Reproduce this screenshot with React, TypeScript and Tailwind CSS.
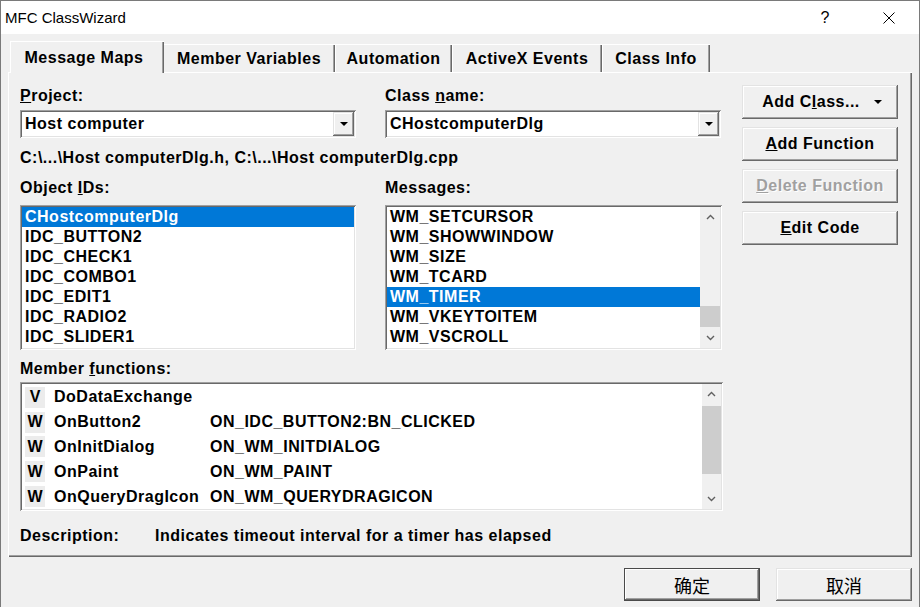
import React from "react";

const raised =
  "shadow-[inset_-1px_-1px_#696969,inset_1px_1px_#e3e3e3,inset_-2px_-2px_#a0a0a0,inset_2px_2px_#ffffff]";
const sunken =
  "shadow-[inset_1px_1px_#a0a0a0,inset_-1px_-1px_#ffffff,inset_2px_2px_#696969,inset_-2px_-2px_#e3e3e3]";

function Chevron({ up }: { up?: boolean }) {
  return (
    <svg width="9" height="6" viewBox="0 0 9 6" className="block">
      <polyline
        points={up ? "1,5 4.5,1.5 8,5" : "1,1 4.5,4.5 8,1"}
        fill="none"
        stroke="#606060"
        strokeWidth="1.4"
      />
    </svg>
  );
}

function DropTri() {
  return (
    <svg width="8" height="4" viewBox="0 0 8 4" className="block">
      <polygon points="0,0 8,0 4,4" fill="#000" />
    </svg>
  );
}

function Combo({ value }: { value: string }) {
  return (
    <div className={`h-[28px] bg-white flex items-center p-[2px] ${sunken}`}>
      <div className="flex-1 pl-[3px] leading-[20px] whitespace-nowrap">{value}</div>
      <div className={`w-[21px] h-[24px] bg-[#f0f0f0] flex items-center justify-center ${raised}`}>
        <DropTri />
      </div>
    </div>
  );
}

function Btn({ children, disabled }: { children: React.ReactNode; disabled?: boolean }) {
  return (
    <div
      className={`h-[34px] bg-[#f0f0f0] flex items-center justify-center ${raised} ${
        disabled ? "text-[#a0a0a0] [text-shadow:1px_1px_0_#ffffff]" : "text-black"
      }`}
    >
      {children}
    </div>
  );
}

const objectIds = [
  "CHostcomputerDlg",
  "IDC_BUTTON2",
  "IDC_CHECK1",
  "IDC_COMBO1",
  "IDC_EDIT1",
  "IDC_RADIO2",
  "IDC_SLIDER1",
];

const messages = [
  "WM_SETCURSOR",
  "WM_SHOWWINDOW",
  "WM_SIZE",
  "WM_TCARD",
  "WM_TIMER",
  "WM_VKEYTOITEM",
  "WM_VSCROLL",
];

const members: [string, string, string][] = [
  ["V", "DoDataExchange", ""],
  ["W", "OnButton2", "ON_IDC_BUTTON2:BN_CLICKED"],
  ["W", "OnInitDialog", "ON_WM_INITDIALOG"],
  ["W", "OnPaint", "ON_WM_PAINT"],
  ["W", "OnQueryDragIcon", "ON_WM_QUERYDRAGICON"],
];

const tabs = [
  { label: "Message Maps", w: "w-[154px]" },
  { label: "Member Variables", w: "w-[172px]" },
  { label: "Automation", w: "w-[117px]" },
  { label: "ActiveX Events", w: "w-[150px]" },
  { label: "Class Info", w: "w-[108px]" },
];

export default function App() {
  return (
    <div className="w-[920px] h-[607px] overflow-hidden bg-[#f0f0f0] border-x border-t border-[#7a7a7a] flex flex-col [font-family:'Liberation_Sans',Arial,sans-serif] text-black">
      {/* Title bar */}
      <div className="h-[33px] bg-white flex items-center pl-[4px] shrink-0">
        <div className="text-[15px] leading-[18px] flex-1">MFC ClassWizard</div>
        <div className="w-[20px] text-center text-[16px] leading-[18px] mr-[48px]">?</div>
        <div className="w-[12px] mr-[24px] flex items-center justify-center">
          <svg width="12" height="12" viewBox="0 0 12 12" className="block">
            <line x1="0.5" y1="0.5" x2="11.5" y2="11.5" stroke="#000" strokeWidth="1" />
            <line x1="11.5" y1="0.5" x2="0.5" y2="11.5" stroke="#000" strokeWidth="1" />
          </svg>
        </div>
      </div>

      {/* Body */}
      <div className="flex-1 flex flex-col pt-[7px] text-[16px] font-bold tracking-[0.5px] leading-[20px]">
        {/* Tabs */}
        <div className="h-[31px] flex items-end pl-[9px]">
          {tabs.map((t, i) =>
            i === 0 ? (
              <div
                key={t.label}
                className={`${t.w} h-[32px] -mb-[1px] -mr-[1px] relative z-10 bg-[#f0f0f0] flex items-center justify-center pt-[1px] pr-[6px] shadow-[inset_1px_1px_#ffffff,inset_-1px_0_#696969,inset_-2px_0_#a0a0a0]`}
              >
                {t.label}
              </div>
            ) : (
              <div
                key={t.label}
                className={`${t.w} h-[28px] bg-[#f0f0f0] flex items-center justify-center pt-[2px] shadow-[inset_1px_1px_#ffffff,inset_-1px_0_#696969,inset_-2px_0_#a0a0a0]`}
              >
                {t.label}
              </div>
            )
          )}
        </div>

        {/* Panel */}
        <div className="ml-[7px] w-[904px] h-[485px] flex pl-[12px] pt-[13px] shadow-[inset_1px_1px_#ffffff,inset_-1px_-1px_#696969,inset_-2px_-2px_#a0a0a0]">
          {/* Left column */}
          <div className="w-[703px] pt-[1px] flex flex-col">
            <div className="flex gap-[29px]">
              <div className="w-[336px] flex flex-col">
                <div className="h-[18px]">
                  <u>P</u>roject:
                </div>
                <div className="mt-[6px]">
                  <Combo value="Host computer" />
                </div>
              </div>
              <div className="w-[336px] flex flex-col">
                <div className="h-[18px]">
                  Class <u>n</u>ame:
                </div>
                <div className="mt-[6px]">
                  <Combo value="CHostcomputerDlg" />
                </div>
              </div>
            </div>

            <div className="mt-[10px] h-[18px] whitespace-nowrap">
              C:\...\Host computerDlg.h, C:\...\Host computerDlg.cpp
            </div>

            <div className="mt-[12px] flex gap-[29px]">
              <div className="w-[336px] h-[18px]">
                Object <u>I</u>Ds:
              </div>
              <div className="w-[337px] h-[18px]">Messages:</div>
            </div>

            <div className="mt-[9px] flex gap-[29px]">
              {/* Object IDs list */}
              <div className={`w-[336px] h-[145px] bg-white p-[2px] ${sunken}`}>
                {objectIds.map((id, i) => (
                  <div
                    key={id}
                    className={`h-[20px] leading-[20px] pl-[3px] whitespace-nowrap ${
                      i === 0 ? "bg-[#0078d7] text-white" : ""
                    }`}
                  >
                    {id}
                  </div>
                ))}
              </div>
              {/* Messages list */}
              <div className={`w-[337px] h-[145px] bg-white p-[2px] flex ${sunken}`}>
                <div className="flex-1 flex flex-col">
                  {messages.map((m) => (
                    <div
                      key={m}
                      className={`h-[20px] leading-[20px] pl-[3px] whitespace-nowrap ${
                        m === "WM_TIMER" ? "bg-[#0078d7] text-white" : ""
                      }`}
                    >
                      {m}
                    </div>
                  ))}
                </div>
                <div className="w-[20px] bg-[#f0f0f0] flex flex-col">
                  <div className="h-[20px] flex items-center justify-center">
                    <Chevron up />
                  </div>
                  <div className="h-[79px]" />
                  <div className="h-[21px] bg-[#cdcdcd]" />
                  <div className="flex-1" />
                  <div className="h-[20px] flex items-center justify-center">
                    <Chevron />
                  </div>
                </div>
              </div>
            </div>

            <div className="mt-[9px] h-[18px]">
              Member <u>f</u>unctions:
            </div>

            {/* Member functions list */}
            <div className={`mt-[5px] h-[129px] bg-white p-[2px] flex ${sunken}`}>
              <div className="flex-1 pt-[1px] flex flex-col">
                {members.map(([k, name, handler]) => (
                  <div key={name} className="h-[25px] flex items-center whitespace-nowrap">
                    <div className="ml-[3px] w-[20px] h-[21px] bg-[#ececec] flex items-center justify-center tracking-normal">
                      {k}
                    </div>
                    <div className="ml-[9px] w-[156px]">{name}</div>
                    <div>{handler}</div>
                  </div>
                ))}
              </div>
              <div className="w-[19px] bg-[#f0f0f0] flex flex-col">
                <div className="h-[20px] flex items-center justify-center">
                  <Chevron up />
                </div>
                <div className="h-[2px]" />
                <div className="h-[68px] bg-[#cdcdcd]" />
                <div className="flex-1" />
                <div className="h-[20px] flex items-center justify-center">
                  <Chevron />
                </div>
              </div>
            </div>

            <div className="mt-[15px] h-[18px] flex whitespace-nowrap">
              <div className="w-[135px]">Description:</div>
              <div>Indicates timeout interval for a timer has elapsed</div>
            </div>
          </div>

          {/* Right buttons */}
          <div className="ml-[19px] w-[156px] flex flex-col gap-[8px]">
            <Btn>
              <span className="pl-[4px]">
                Add C<u>l</u>ass...
              </span>
              <span className="ml-[14px]">
                <DropTri />
              </span>
            </Btn>
            <Btn>
              <span>
                <u>A</u>dd Function
              </span>
            </Btn>
            <Btn disabled>
              <span>
                <u>D</u>elete Function
              </span>
            </Btn>
            <Btn>
              <span>
                <u>E</u>dit Code
              </span>
            </Btn>
          </div>
        </div>

        {/* Bottom buttons */}
        <div className="mt-[11px] h-[33px] flex justify-end gap-[16px] pr-[7px] font-normal tracking-normal [font-family:'Noto_Sans_CJK_SC','Noto_Sans',sans-serif] text-[18px]">
          <div className="w-[136px] h-[33px] bg-[#f0f0f0] flex items-center justify-center border border-[#4a4a4a] shadow-[inset_-1px_-1px_#696969,inset_1px_1px_#ffffff,inset_-2px_-2px_#a0a0a0]">
            确定
          </div>
          <div className={`w-[136px] h-[33px] bg-[#f0f0f0] flex items-center justify-center ${raised}`}>
            取消
          </div>
        </div>
      </div>
    </div>
  );
}
